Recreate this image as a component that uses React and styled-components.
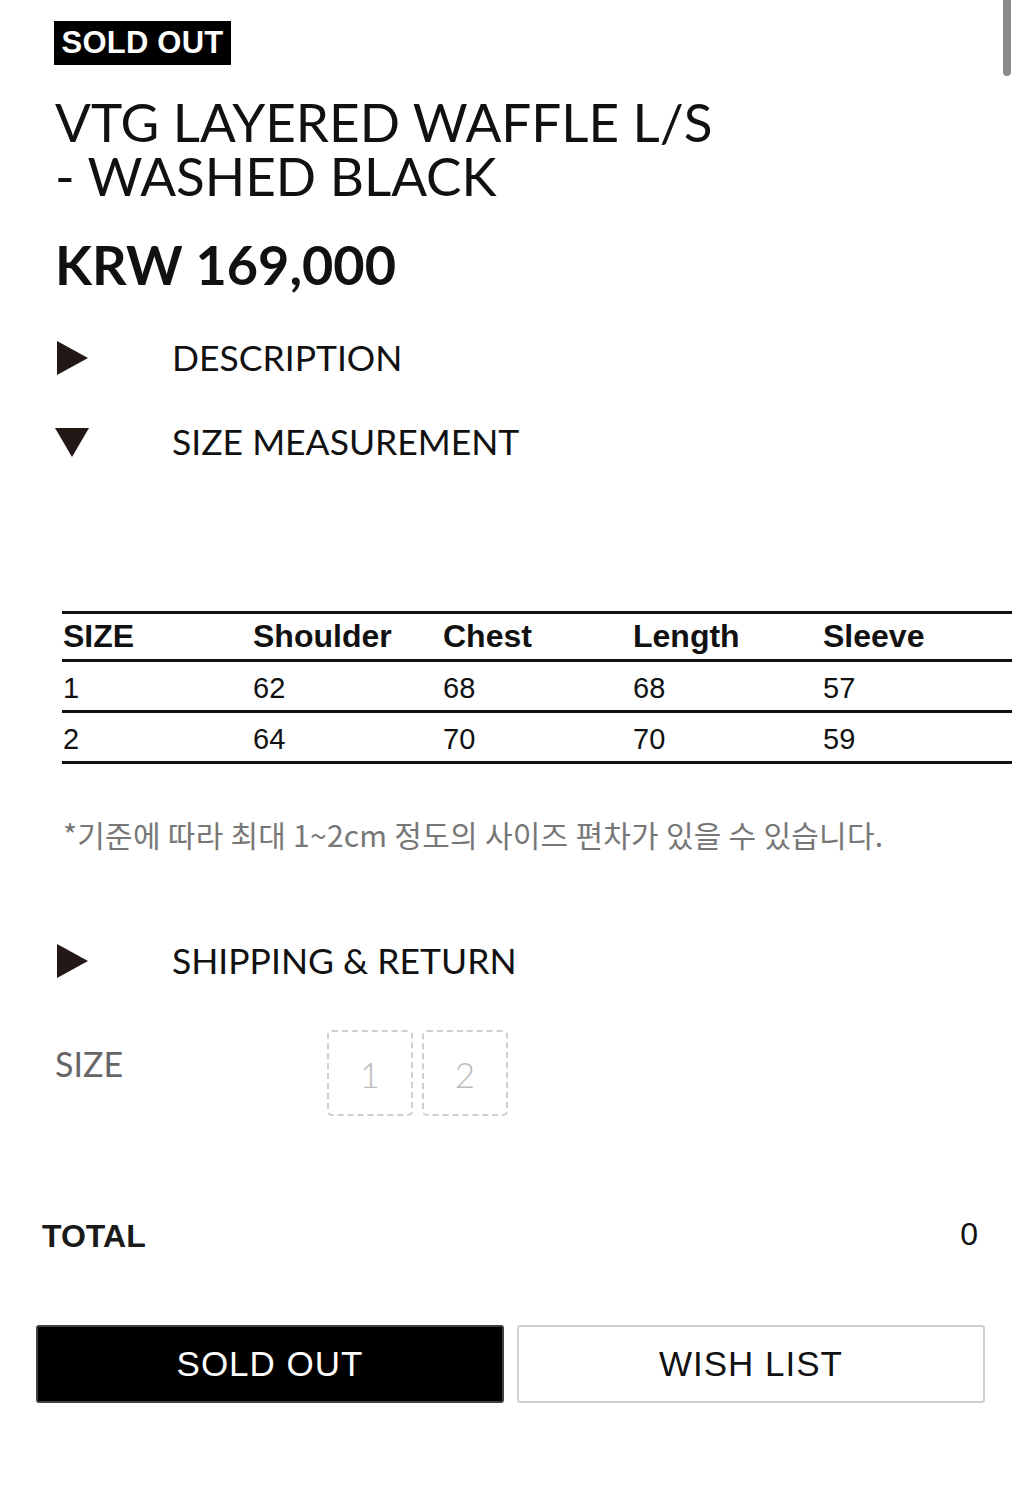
import React from "react";
import styled, { createGlobalStyle } from "styled-components";

const Global = createGlobalStyle`
  html, body { margin: 0; padding: 0; background: #fff; }
  body { font-family: Lato, "Noto Sans CJK KR", sans-serif; color: #111; }
  * { box-sizing: border-box; }
`;

const Page = styled.div`
  position: relative;
  width: 1021px;
  min-height: 1500px;
  padding: 21px 0 0 0;
  display: flex;
  flex-direction: column;
  overflow: hidden;
`;

const Scrollbar = styled.div`
  position: fixed;
  top: 0;
  right: 10px;
  width: 8px;
  height: 76px;
  border-radius: 0 0 4px 4px;
  background: #8a8a8a;
`;

const Badge = styled.div`
  align-self: flex-start;
  margin-left: 54px;
  width: 177px;
  height: 44px;
  background: #000;
  color: #fff;
  font-family: "Liberation Sans", Arial, sans-serif;
  font-weight: 700;
  font-size: 31px;
  line-height: 44px;
  text-align: center;
  letter-spacing: 0.2px;
`;

const Title = styled.h1`
  margin: 30px 0 0 55px;
  font-family: Lato, sans-serif;
  font-weight: 400;
  font-size: 53px;
  line-height: 54px;
  color: #111;
`;

const TitleLine = styled.span`
  display: block;
  height: 54px;
`;

const Price = styled.div`
  margin: 30px 0 0 55px;
  font-family: Lato, sans-serif;
  font-weight: 700;
  font-size: 54px;
  line-height: 64px;
  color: #111;
`;

const Accordion = styled.div`
  display: grid;
  grid-template-columns: 117px 1fr;
  align-items: center;
  margin: ${(p) => p.$mt}px 0 0 55px;
  height: 42px;
`;

const AccLabel = styled.span`
  font-family: Lato, sans-serif;
  font-size: 35.5px;
  font-weight: 400;
  color: #111;
  line-height: 42px;
`;

const Tri = ({ down }) =>
  down ? (
    <svg width="34" height="29" viewBox="0 0 34 29">
      <path d="M0 0 H34 L17 29 Z" fill="#231815" />
    </svg>
  ) : (
    <svg width="34" height="34" viewBox="0 0 34 34" style={{ marginLeft: 2 }}>
      <path d="M0 0 L31 17 L0 34 Z" fill="#231815" />
    </svg>
  );

const Table = styled.table`
  margin: 148px 0 0 62px;
  width: 950px;
  border-collapse: collapse;
  table-layout: fixed;
`;

const Row = styled.tr`
  border-top: 3px solid #111;
  &:last-child { border-bottom: 3px solid #111; }
`;

const Th = styled.th`
  text-align: left;
  padding: 0 0 0 1px;
  height: 48px;
  font-family: "Liberation Sans", Arial, sans-serif;
  font-weight: 700;
  font-size: 32px;
  color: #111;
`;

const Td = styled.td`
  padding: 4px 0 0 1px;
  height: 51px;
  font-family: "Liberation Sans", Arial, sans-serif;
  font-weight: 400;
  font-size: 29px;
  color: #111;
`;

const Note = styled.p`
  margin: 50px 0 0 63px;
  font-family: "Noto Sans CJK KR", sans-serif;
  font-size: 30px;
  line-height: 40px;
  color: #777;
  letter-spacing: 0.25px;
`;

const SizeRow = styled.div`
  display: grid;
  grid-template-columns: 272px auto;
  align-items: start;
  margin: 48px 0 0 55px;
`;

const SizeLabel = styled.span`
  margin-top: 13px;
  font-family: Lato, sans-serif;
  font-size: 34px;
  color: #666;
`;

const Options = styled.div`
  display: flex;
  gap: 9px;
`;

const Option = styled.div`
  width: 86px;
  height: 86px;
  border: 2px dashed #cfcfcf;
  border-radius: 5px;
  display: flex;
  align-items: center;
  justify-content: center;
  font-family: Lato, sans-serif;
  font-size: 35px;
  font-weight: 300;
  color: #bbb;
  padding-top: 2px;
`;

const TotalRow = styled.div`
  display: flex;
  justify-content: space-between;
  align-items: center;
  margin: 102px 0 0 42px;
  width: 936px;
`;

const TotalLabel = styled.span`
  font-family: "Liberation Sans", Arial, sans-serif;
  font-weight: 700;
  font-size: 32px;
  color: #1a1a1a;
`;

const TotalValue = styled.span`
  font-family: "Liberation Sans", Arial, sans-serif;
  font-size: 32px;
  color: #111;
  margin-top: -4px;
`;

const Buttons = styled.div`
  display: flex;
  gap: 13px;
  margin: 70px 0 0 36px;
`;

const Button = styled.button`
  width: 468px;
  height: 78px;
  border-radius: 3px;
  border: 2px solid ${(p) => (p.$dark ? "#3e4048" : "#cfcfcf")};
  background: ${(p) => (p.$dark ? "#000" : "#fff")};
  color: ${(p) => (p.$dark ? "#fff" : "#111")};
  font-family: "Liberation Sans", Arial, sans-serif;
  font-size: 35px;
  letter-spacing: 1px;
  padding: 0;
  cursor: pointer;
`;

const headers = ["SIZE", "Shoulder", "Chest", "Length", "Sleeve"];
const rows = [
  ["1", "62", "68", "68", "57"],
  ["2", "64", "70", "70", "59"],
];

export default function App() {
  return (
    <>
      <Global />
      <Page>
        <Scrollbar />
        <Badge>SOLD OUT</Badge>
        <Title>
          <TitleLine>VTG LAYERED WAFFLE L/S</TitleLine>
          <TitleLine>- WASHED BLACK</TitleLine>
        </Title>
        <Price>KRW 169,000</Price>
        <Accordion $mt={40}>
          <Tri />
          <AccLabel>DESCRIPTION</AccLabel>
        </Accordion>
        <Accordion $mt={42}>
          <Tri down />
          <AccLabel>SIZE MEASUREMENT</AccLabel>
        </Accordion>
        <Table>
          <thead>
            <Row>
              {headers.map((h) => (
                <Th key={h}>{h}</Th>
              ))}
            </Row>
          </thead>
          <tbody>
            {rows.map((r) => (
              <Row key={r[0]}>
                {r.map((c, i) => (
                  <Td key={i}>{c}</Td>
                ))}
              </Row>
            ))}
          </tbody>
        </Table>
        <Note>*기준에 따라 최대 1~2cm 정도의 사이즈 편차가 있을 수 있습니다.</Note>
        <Accordion $mt={86}>
          <Tri />
          <AccLabel>SHIPPING &amp; RETURN</AccLabel>
        </Accordion>
        <SizeRow>
          <SizeLabel>SIZE</SizeLabel>
          <Options>
            <Option>1</Option>
            <Option>2</Option>
          </Options>
        </SizeRow>
        <TotalRow>
          <TotalLabel>TOTAL</TotalLabel>
          <TotalValue>0</TotalValue>
        </TotalRow>
        <Buttons>
          <Button $dark>SOLD OUT</Button>
          <Button>WISH LIST</Button>
        </Buttons>
      </Page>
    </>
  );
}
